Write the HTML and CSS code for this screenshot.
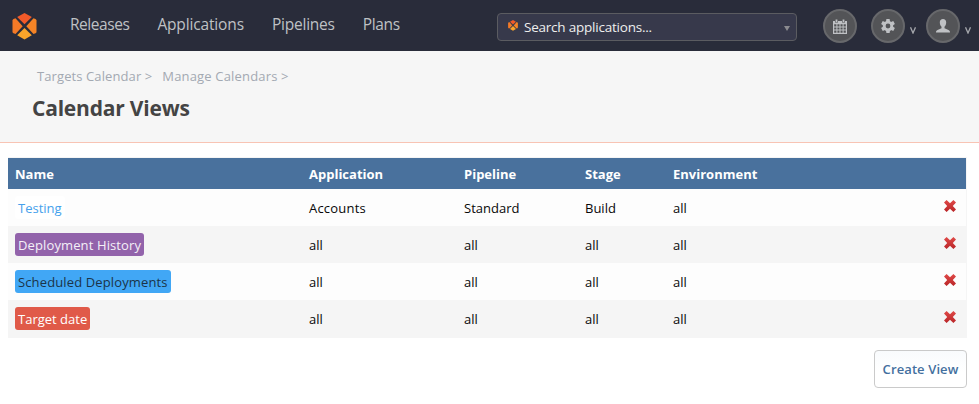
FILE: index.html
```html
<!DOCTYPE html>
<html lang="en">
<head>
<meta charset="utf-8">
<title>Calendar Views</title>
<link rel="stylesheet" href="styles.css">
</head>
<body>
<svg class="defs" aria-hidden="true">
  <defs>
    <linearGradient id="red" x1="0" y1="0" x2="0" y2="1"><stop offset="0" stop-color="#e04a48"/><stop offset="1" stop-color="#b92528"/></linearGradient>
    <symbol id="logo" viewBox="0 0 24 27">
      <path fill="#f15a29" d="M12 0 L19.3 4.1 L12 11.2 L4.7 4.1Z"/>
      <path fill="#f47a27" d="M0 7.5 Q0 6.5 1 6 L3 5.2 L10.2 13.2 L3 21.1 L1 20.2 Q0 19.7 0 18.7Z"/>
      <path fill="#f58426" d="M24 7.5 Q24 6.5 23 6 L21 5.2 L13.8 13.2 L21 21.1 L23 20.2 Q24 19.7 24 18.7Z"/>
      <path fill="#f9a42a" d="M12 15 L19.3 22.3 L12 26.4 L4.7 22.3Z"/>
    </symbol>
    <symbol id="cross" viewBox="0 0 12 12">
      <path fill="url(#red)" d="M0 2.6 L2.6 0 L6 3.2 L9.4 0 L12 2.6 L8.8 6 L12 9.4 L9.4 12 L6 8.8 L2.6 12 L0 9.4 L3.2 6Z"/>
    </symbol>
  </defs>
</svg>
<header class="topbar">
  <svg class="logo"><use href="#logo"/></svg>
  <nav class="nav">
    <a class="nav-releases">Releases</a><a class="nav-applications">Applications</a><a class="nav-pipelines">Pipelines</a><a class="nav-plans">Plans</a>
  </nav>
  <div class="search">
    <svg class="search-logo"><use href="#logo"/></svg>
    <span class="search-text">Search applications...</span>
    <svg class="search-arrow" viewBox="0 0 6 5"><path fill="#8b8b90" d="M0 0H6L3 5Z"/></svg>
  </div>
  <div class="tools">
    <span class="tool"><svg width="14" height="15" viewBox="0 0 14 15"><path fill="#bfc1c4" fill-rule="evenodd" d="M0 2H2V3.5H5V2H9V3.5H12V2H14V15H0Z M1.2 5.3V7.4H3.4V5.3Z M4.4 5.3V7.4H6.5V5.3Z M7.5 5.3V7.4H9.6V5.3Z M10.6 5.3V7.4H12.8V5.3Z M1.2 8.4V10.6H3.4V8.4Z M4.4 8.4V10.6H6.5V8.4Z M7.5 8.4V10.6H9.6V8.4Z M10.6 8.4V10.6H12.8V8.4Z M1.2 11.6V13.8H3.4V11.6Z M4.4 11.6V13.8H6.5V11.6Z M7.5 11.6V13.8H9.6V11.6Z M10.6 11.6V13.8H12.8V11.6Z"/><path fill="#bfc1c4" d="M2.6 0.5H4.4V3H2.6Z M9.6 0.5H11.4V3H9.6Z"/></svg></span>
    <span class="tool"><svg width="14" height="14" viewBox="0 0 14 14"><g fill="#bfc1c4"><path id="tooth" d="M5.4 0H8.6L9.1 3H4.9Z"/><use href="#tooth" transform="rotate(60 7 7)"/><use href="#tooth" transform="rotate(120 7 7)"/><use href="#tooth" transform="rotate(180 7 7)"/><use href="#tooth" transform="rotate(240 7 7)"/><use href="#tooth" transform="rotate(300 7 7)"/></g><circle cx="7" cy="7" r="3.8" fill="none" stroke="#bfc1c4" stroke-width="2.8"/></svg></span>
    <svg class="caret" viewBox="0 0 6 7"><path d="M.5 .3L3 6L5.5 .3"/></svg>
    <span class="tool"><svg width="14" height="14" viewBox="0 0 14 14"><path fill="#bfc1c4" d="M7 0C9 0 10.3 1.4 10.2 3.6C10.1 5.7 9.3 7.1 8.5 7.8V9.3L12.5 11C13.6 11.5 14 12.2 14 13.4H0C0 12.2 .4 11.5 1.5 11L5.5 9.3V7.8C4.7 7.1 3.9 5.7 3.8 3.6C3.7 1.4 5 0 7 0Z"/></svg></span>
    <svg class="caret" viewBox="0 0 6 7"><path d="M.5 .3L3 6L5.5 .3"/></svg>
  </div>
</header>
<section class="page-head">
  <div class="crumbs"><span class="crumb-targets">Targets Calendar &gt;</span><span class="crumb-manage">Manage Calendars &gt;</span></div>
  <h1>Calendar Views</h1>
</section>
<main>
  <div class="table">
    <div class="row head"><span>Name</span><span>Application</span><span>Pipeline</span><span>Stage</span><span>Environment</span></div>
    <div class="row"><span><a class="tag testing">Testing</a></span><span class="accounts">Accounts</span><span>Standard</span><span>Build</span><span>all</span><svg class="cross"><use href="#cross"/></svg></div>
    <div class="row alt"><span><a class="tag history">Deployment History</a></span><span>all</span><span>all</span><span>all</span><span>all</span><svg class="cross"><use href="#cross"/></svg></div>
    <div class="row"><span><a class="tag scheduled">Scheduled Deployments</a></span><span>all</span><span>all</span><span>all</span><span>all</span><svg class="cross"><use href="#cross"/></svg></div>
    <div class="row alt"><span><a class="tag target">Target date</a></span><span>all</span><span>all</span><span>all</span><span>all</span><svg class="cross"><use href="#cross"/></svg></div>
  </div>
  <button class="create">Create View</button>
</main>
</body>
</html>
```
FILE: styles.css
```css
* { box-sizing: border-box; }
body { margin: 0; height: 404px; overflow: hidden; background: #fff; color: #080808; font: 13px/20px "Open Sans", "Noto Sans", sans-serif; }
.defs { display: block; width: 0; height: 0; }
.topbar { display: flex; align-items: flex-start; height: 51px; padding-left: 12px; background: #292c3a; }
.logo { flex: none; width: 25px; height: 27px; margin-top: 13px; }
.nav { display: flex; flex: none; gap: 28px; width: 427px; margin: 14px 0 0 33px; color: #bfc1c4; font-size: 15.5px; white-space: nowrap; }
.nav-releases { letter-spacing: -.45px; }
.nav-applications { letter-spacing: -.15px; }
.nav-pipelines { letter-spacing: -.22px; }
.nav-plans { letter-spacing: -.35px; }
.search { display: flex; flex: none; align-items: center; width: 300px; height: 28px; margin-top: 13px; padding: 0 6px 0 10px; border: 1px solid #5b5c61; border-radius: 4px; background: #37394b; color: #eee; }
.search-logo { width: 10px; height: 11px; margin: -3px 6px 0 0; }
.search-text { flex: 1; font-size: 13.5px; letter-spacing: -.22px; }
.search-arrow { width: 6px; height: 5px; margin-top: 2px; }
.tools { display: flex; flex: none; margin: 9px 0 0 26px; }
.tool { display: flex; align-items: center; justify-content: center; width: 34px; height: 34px; border: 2px solid #67686b; border-radius: 50%; background: #535457; }
.tool + .tool { margin-left: 14px; }
.caret { width: 6px; height: 7px; margin: 18px 10px 0 5px; fill: none; stroke: #a6a8ad; stroke-width: 1.3; }
.page-head { height: 92px; padding: 15px 32px 0; border-bottom: 1px solid #f8c4b4; background: #f6f6f6; }
.crumbs { display: flex; gap: 10px; padding-left: 5px; color: #a3a9b2; }
.crumb-targets { letter-spacing: .1px; }
.crumb-manage { letter-spacing: .17px; }
h1 { margin: 7px 0 0; color: #444; font-size: 21px; line-height: 30px; font-weight: 700; letter-spacing: -.2px; }
main { display: flex; flex-direction: column; align-items: flex-end; padding: 14px 12px 0 8px; }
.table { width: 959px; padding-top: 1px; background: #f5f5f5; }
.row { display: grid; grid-template-columns: 294px 155px 121px 88px 1fr 12px; align-items: center; height: 37px; margin-right: 1px; padding: 0 10px 0 7px; background: #fdfdfd; }
.row.head { height: 31px; background: #49719d; color: #fff; font-weight: 700; }
.row.alt { margin-right: 0; padding-right: 11px; background: #f5f5f5; }
.row:last-child { height: 38px; padding-bottom: 1px; }
.tag { display: block; width: fit-content; height: 23px; padding: 1px 3px 0; border-radius: 3px; line-height: 23px; }
.accounts { letter-spacing: .2px; }
.testing { background: #fff; color: #46a1ec; }
.history { background: #9263ab; color: #f4f0f7; letter-spacing: .12px; }
.scheduled { background: #41a7f5; color: #1b3448; letter-spacing: .13px; }
.target { background: #e05a49; color: #fff; }
.cross { width: 12px; height: 12px; margin-top: -3px; }
.create { width: 93px; height: 38px; margin-top: 12px; padding: 0; border: 1px solid #cacaca; border-radius: 4px; background: linear-gradient(#f9fbfd, #fff 60%); color: #436f9e; font: 600 13px/20px "Open Sans", sans-serif; letter-spacing: .1px; white-space: nowrap; }
```
